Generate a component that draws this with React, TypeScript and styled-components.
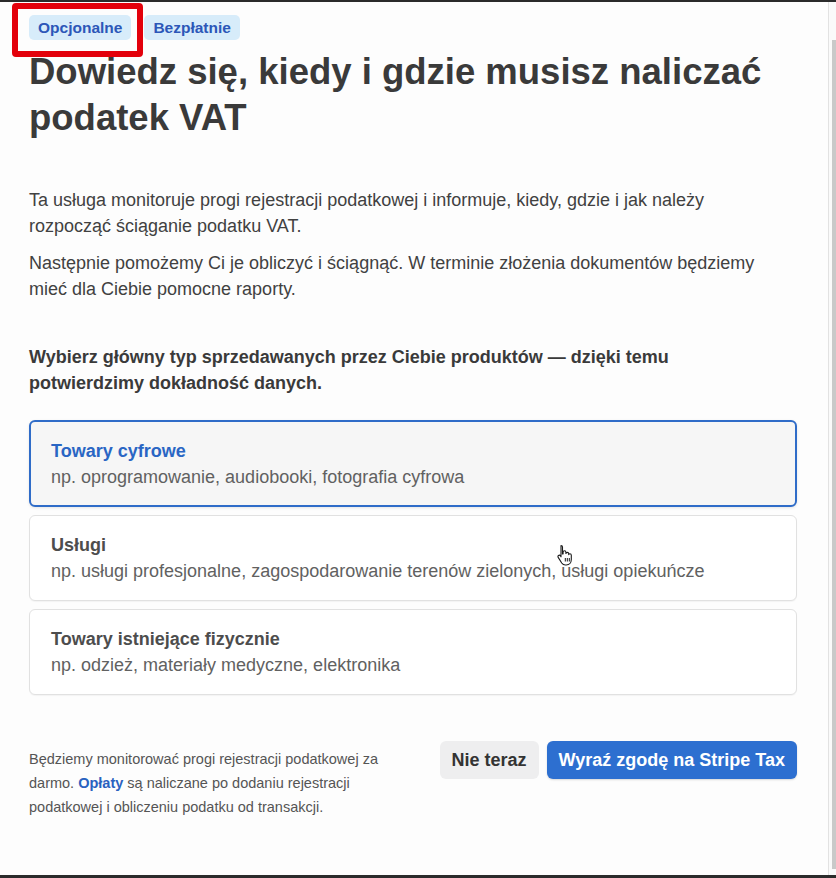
import React from 'react'
import styled, { createGlobalStyle } from 'styled-components'

const GlobalStyle = createGlobalStyle`
  html, body {
    margin: 0;
    padding: 0;
    background: #fdfdfd;
  }
  body {
    font-family: "Liberation Sans", Arial, Helvetica, sans-serif;
    color: #414141;
  }
`

const Frame = styled.div`
  position: relative;
  width: 836px;
  height: 878px;
  display: flex;
  flex-direction: column;
  overflow: hidden;
  background: #fdfdfd;
`

const TopBar = styled.div`
  height: 2px;
  background: #2b2b2b;
  flex-shrink: 0;
`

const BottomBar = styled.div`
  height: 3px;
  background: #2b2b2b;
  flex-shrink: 0;
`

const Body = styled.div`
  flex: 1;
  display: flex;
  min-height: 0;
`

const Content = styled.div`
  flex: 1;
  padding: 13px 31px 0 29px;
  display: flex;
  flex-direction: column;
`

const Gutter = styled.div`
  box-sizing: border-box;
  width: 8px;
  border-left: 1px solid #e2e2e2;
  background: #fafafa;
  padding: 38px 0 6px 3px;
  display: flex;
`

const Thumb = styled.div`
  flex: 1;
  background: #c9c9c9;
`

const Badges = styled.div`
  display: flex;
  gap: 13px;
`

const Badge = styled.span`
  display: inline-block;
  padding: 4px 9px;
  border-radius: 5px;
  background: #d7ecfa;
  color: #2c57b8;
  font-size: 15.5px;
  font-weight: 700;
  line-height: 17px;
`

const Highlight = styled.div`
  position: absolute;
  left: 12px;
  top: 3px;
  width: 131px;
  height: 54px;
  box-sizing: border-box;
  border: 6px solid #e3000b;
  border-radius: 4px;
  pointer-events: none;
`

const Title = styled.h1`
  margin: 9px 0 0;
  font-size: 36.5px;
  line-height: 46px;
  font-weight: 700;
  color: #3a3a3a;
`

const Intro = styled.div`
  margin-top: 46px;
  display: flex;
  flex-direction: column;
  gap: 11px;
`

const Paragraph = styled.p`
  margin: 0;
  font-size: 18px;
  line-height: 26px;
  color: #414141;
`

const Question = styled.p`
  margin: 42px 0 0;
  font-size: 18px;
  line-height: 26px;
  font-weight: 700;
  color: #3a3a3a;
`

const Options = styled.div`
  margin-top: 24px;
  display: flex;
  flex-direction: column;
  gap: 8px;
`

const Option = styled.div<{ $selected?: boolean }>`
  height: ${p => (p.$selected ? 87 : 86)}px;
  box-sizing: border-box;
  padding: ${p => (p.$selected ? '17px 20px' : '17px 21px')};
  border: ${p => (p.$selected ? '2px solid #2f6cc8' : '1px solid #e1e1e1')};
  border-radius: 6px;
  background: ${p => (p.$selected ? '#f6f6f6' : '#ffffff')};
  box-shadow: ${p => (p.$selected ? '0 1px 3px rgba(0,0,0,0.10)' : '0 1px 1px rgba(0,0,0,0.04)')};
  display: flex;
  flex-direction: column;
  gap: 2px;
`

const OptionTitle = styled.div<{ $selected?: boolean }>`
  font-size: 18px;
  line-height: 24px;
  font-weight: 700;
  color: ${p => (p.$selected ? '#2a66c4' : '#4d4d4d')};
`

const OptionDesc = styled.div`
  font-size: 18px;
  line-height: 24px;
  color: #616161;
`

const Footer = styled.div`
  margin-top: 46px;
  display: flex;
  justify-content: space-between;
  align-items: flex-start;
`

const Note = styled.p`
  margin: 6px 0 0;
  font-size: 14.5px;
  line-height: 24px;
  color: #555555;
`

const NoteLink = styled.a`
  color: #2a62c0;
  font-weight: 700;
  text-decoration: none;
`

const Actions = styled.div`
  display: flex;
  gap: 8px;
`

const Button = styled.button<{ $primary?: boolean }>`
  height: 38px;
  padding: 0 12px;
  border: none;
  border-radius: 6px;
  font-family: inherit;
  font-size: 18px;
  font-weight: 700;
  background: ${p => (p.$primary ? '#2d6fd0' : '#eeeeef')};
  color: ${p => (p.$primary ? '#ffffff' : '#333333')};
  box-shadow: ${p => (p.$primary ? '0 1px 2px rgba(0,0,0,0.15)' : 'none')};
`

const Cursor = styled.svg`
  position: absolute;
  left: 556px;
  top: 544px;
  pointer-events: none;
`

const options = [
  {
    title: 'Towary cyfrowe',
    desc: 'np. oprogramowanie, audiobooki, fotografia cyfrowa',
    selected: true,
  },
  {
    title: 'Usługi',
    desc: 'np. usługi profesjonalne, zagospodarowanie terenów zielonych, usługi opiekuńcze',
  },
  {
    title: 'Towary istniejące fizycznie',
    desc: 'np. odzież, materiały medyczne, elektronika',
  },
]

export default function App() {
  return (
    <Frame>
      <GlobalStyle />
      <TopBar />
      <Body>
        <Content>
          <Badges>
            <Badge>Opcjonalne</Badge>
            <Badge>Bezpłatnie</Badge>
          </Badges>
          <Title>
            Dowiedz się, kiedy i gdzie musisz naliczać
            <br />
            podatek VAT
          </Title>
          <Intro>
            <Paragraph>
              Ta usługa monitoruje progi rejestracji podatkowej i informuje, kiedy, gdzie i jak należy
              <br />
              rozpocząć ściąganie podatku VAT.
            </Paragraph>
            <Paragraph>
              Następnie pomożemy Ci je obliczyć i ściągnąć. W terminie złożenia dokumentów będziemy
              <br />
              mieć dla Ciebie pomocne raporty.
            </Paragraph>
          </Intro>
          <Question>
            Wybierz główny typ sprzedawanych przez Ciebie produktów — dzięki temu
            <br />
            potwierdzimy dokładność danych.
          </Question>
          <Options>
            {options.map(o => (
              <Option key={o.title} $selected={o.selected}>
                <OptionTitle $selected={o.selected}>{o.title}</OptionTitle>
                <OptionDesc>{o.desc}</OptionDesc>
              </Option>
            ))}
          </Options>
          <Footer>
            <Note>
              Będziemy monitorować progi rejestracji podatkowej za
              <br />
              darmo. <NoteLink>Opłaty</NoteLink> są naliczane po dodaniu rejestracji
              <br />
              podatkowej i obliczeniu podatku od transakcji.
            </Note>
            <Actions>
              <Button>Nie teraz</Button>
              <Button $primary>Wyraź zgodę na Stripe Tax</Button>
            </Actions>
          </Footer>
        </Content>
        <Gutter>
          <Thumb />
        </Gutter>
      </Body>
      <BottomBar />
      <Highlight />
      <Cursor width="20" height="22" viewBox="0 0 20 22">
        <path
          d="M5 1.5c.9 0 1.5.6 1.5 1.5v7l.6-.1V8.2c0-.8.6-1.4 1.4-1.4s1.4.6 1.4 1.4v1.3c.2-.7.8-1.1 1.4-1.1.8 0 1.4.6 1.4 1.4v.8c.2-.5.7-.8 1.2-.8.8 0 1.4.6 1.4 1.4v4.4c0 3-2 5.4-5 5.4H9.4c-1.6 0-2.8-.7-3.7-2L2.2 13.4c-.5-.7-.3-1.5.3-1.9.6-.4 1.4-.3 1.8.3l.7 1V3c0-.9.1-1.5 0-1.5z"
          fill="#ffffff"
          stroke="#1a1a1a"
          strokeWidth="1.1"
          strokeLinejoin="round"
        />
        <path d="M9.3 14v3.5M11.3 14v3.5M13.3 14v3.5" stroke="#1a1a1a" strokeWidth="1" />
      </Cursor>
    </Frame>
  )
}
